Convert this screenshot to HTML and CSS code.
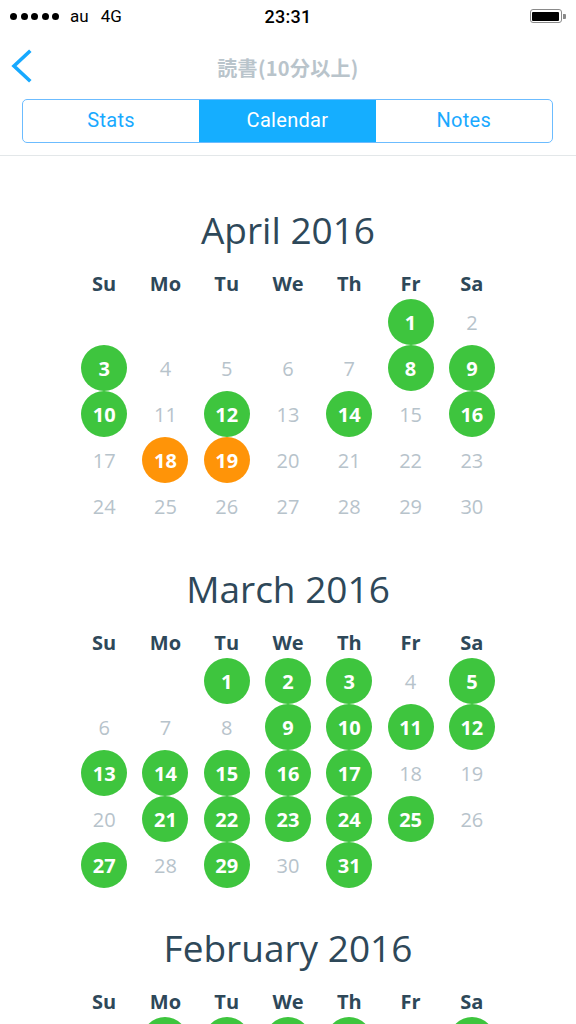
FILE: index.html
```html
<!DOCTYPE html>
<html lang="ja">
<head>
<meta charset="utf-8">
<title>読書(10分以上)</title>
<link rel="stylesheet" href="styles.css">
</head>
<body>
<div class="screen">
  <div class="status">
    <div class="status-left">
      <span class="dots"><i></i><i></i><i></i><i></i><i></i></span>
      <span class="carrier">au</span>
      <span class="net">4G</span>
    </div>
    <div class="time">23:31</div>
    <div class="status-right">
      <span class="battery"><span class="battery-fill"></span></span><span class="battery-tip"></span>
    </div>
  </div>

  <div class="nav">
    <svg class="back" width="24" height="34" viewBox="0 0 24 34"><path d="M19 3 L4 17 L19 31" fill="none" stroke="#17a9ff" stroke-width="3.6" stroke-linecap="square"/></svg>
    <div class="nav-title">読書(10分以上)</div>
  </div>

  <div class="seg-wrap">
    <div class="segment">
      <div class="seg">Stats</div>
      <div class="seg active">Calendar</div>
      <div class="seg">Notes</div>
    </div>
  </div>

  <div class="content">
    <section class="month">
      <h2 class="month-title">April 2016</h2>
      <div class="grid">
        <div class="wd">Su</div><div class="wd">Mo</div><div class="wd">Tu</div><div class="wd">We</div><div class="wd">Th</div><div class="wd">Fr</div><div class="wd">Sa</div>
        <div class="day"></div><div class="day"></div><div class="day"></div><div class="day"></div><div class="day"></div><div class="day"><span class="g">1</span></div><div class="day">2</div>
        <div class="day"><span class="g">3</span></div><div class="day">4</div><div class="day">5</div><div class="day">6</div><div class="day">7</div><div class="day"><span class="g">8</span></div><div class="day"><span class="g">9</span></div>
        <div class="day"><span class="g">10</span></div><div class="day">11</div><div class="day"><span class="g">12</span></div><div class="day">13</div><div class="day"><span class="g">14</span></div><div class="day">15</div><div class="day"><span class="g">16</span></div>
        <div class="day">17</div><div class="day"><span class="o">18</span></div><div class="day"><span class="o">19</span></div><div class="day">20</div><div class="day">21</div><div class="day">22</div><div class="day">23</div>
        <div class="day">24</div><div class="day">25</div><div class="day">26</div><div class="day">27</div><div class="day">28</div><div class="day">29</div><div class="day">30</div>
      </div>
    </section>

    <section class="month">
      <h2 class="month-title">March 2016</h2>
      <div class="grid">
        <div class="wd">Su</div><div class="wd">Mo</div><div class="wd">Tu</div><div class="wd">We</div><div class="wd">Th</div><div class="wd">Fr</div><div class="wd">Sa</div>
        <div class="day"></div><div class="day"></div><div class="day"><span class="g">1</span></div><div class="day"><span class="g">2</span></div><div class="day"><span class="g">3</span></div><div class="day">4</div><div class="day"><span class="g">5</span></div>
        <div class="day">6</div><div class="day">7</div><div class="day">8</div><div class="day"><span class="g">9</span></div><div class="day"><span class="g">10</span></div><div class="day"><span class="g">11</span></div><div class="day"><span class="g">12</span></div>
        <div class="day"><span class="g">13</span></div><div class="day"><span class="g">14</span></div><div class="day"><span class="g">15</span></div><div class="day"><span class="g">16</span></div><div class="day"><span class="g">17</span></div><div class="day">18</div><div class="day">19</div>
        <div class="day">20</div><div class="day"><span class="g">21</span></div><div class="day"><span class="g">22</span></div><div class="day"><span class="g">23</span></div><div class="day"><span class="g">24</span></div><div class="day"><span class="g">25</span></div><div class="day">26</div>
        <div class="day"><span class="g">27</span></div><div class="day">28</div><div class="day"><span class="g">29</span></div><div class="day">30</div><div class="day"><span class="g">31</span></div><div class="day"></div><div class="day"></div>
      </div>
    </section>

    <section class="month">
      <h2 class="month-title">February 2016</h2>
      <div class="grid">
        <div class="wd">Su</div><div class="wd">Mo</div><div class="wd">Tu</div><div class="wd">We</div><div class="wd">Th</div><div class="wd">Fr</div><div class="wd">Sa</div>
        <div class="day"></div><div class="day"><span class="g">1</span></div><div class="day"><span class="g">2</span></div><div class="day"><span class="g">3</span></div><div class="day"><span class="g">4</span></div><div class="day">5</div><div class="day"><span class="g">6</span></div>
        <div class="day">7</div><div class="day">8</div><div class="day">9</div><div class="day">10</div><div class="day">11</div><div class="day">12</div><div class="day">13</div>
      </div>
    </section>
  </div>
</div>
</body>
</html>
```

FILE: styles.css
```css
* { box-sizing: border-box; }
html, body { margin: 0; padding: 0; background: #fff; }
.screen {
  width: 576px;
  height: 1024px;
  overflow: hidden;
  background: #fff;
}

/* status bar */
.status {
  height: 40px;
  display: flex;
  align-items: center;
  justify-content: space-between;
  padding: 0 10px 8px 10px;
  font-family: Roboto, "Liberation Sans", sans-serif;
  color: #000;
}
.status-left { display: flex; align-items: center; width: 160px; }
.dots { display: flex; gap: 3.5px; }
.dots i { display: block; width: 7px; height: 7px; border-radius: 50%; background: #000; }
.carrier { font-size: 17px; margin-left: 11px; }
.net { font-size: 17px; margin-left: 12px; }
.time { font-size: 18px; font-weight: 500; letter-spacing: 0.3px; }
.status-right { width: 160px; display: flex; justify-content: flex-end; align-items: center; }
.battery {
  width: 32px; height: 14px;
  border: 1.5px solid #8a8a8a;
  border-radius: 3px;
  padding: 1.5px;
  display: flex;
}
.battery-fill { flex: 1; background: #000; border-radius: 1px; }
.battery-tip { width: 3px; height: 5px; background: #8a8a8a; border-radius: 0 1px 1px 0; margin-left: 1px; }

/* nav */
.nav {
  height: 54px;
  display: flex;
  align-items: center;
  justify-content: center;
  position: relative;
}
.back { position: absolute; left: 10px; top: 9px; }
.nav-title {
  font-family: "Noto Sans CJK JP", Roboto, sans-serif;
  font-size: 20px;
  font-weight: 700;
  color: #b9c4cb;
  letter-spacing: 0.3px;
}

/* segmented control */
.seg-wrap {
  padding: 5px 23px 12px 22px;
  border-bottom: 1px solid #e3e7e9;
}
.segment {
  display: grid;
  grid-template-columns: 1fr 1fr 1fr;
  height: 44px;
  border: 1.5px solid #6cbcff;
  border-radius: 5px;
  overflow: hidden;
}
.seg {
  display: flex;
  align-items: center;
  justify-content: center;
  padding-bottom: 2px;
  font-family: Roboto, "Liberation Sans", sans-serif;
  font-size: 20px;
  letter-spacing: 0.3px;
  color: #1aa9ff;
}
.seg.active { background: #15aeff; color: #fff; }

/* calendar */
.content { padding-top: 50px; }
.month { margin-bottom: 36px; }
.month-title {
  margin: 0 0 15px 0;
  height: 48px;
  line-height: 48px;
  text-align: center;
  font-family: "Open Sans", sans-serif;
  font-weight: 400;
  font-size: 37px;
  color: #2e4859;
}
.grid {
  width: 429px;
  margin: 0 auto;
  display: grid;
  grid-template-columns: repeat(7, 1fr);
  font-family: "Open Sans", sans-serif;
}
.wd {
  height: 30px;
  line-height: 30px;
  text-align: center;
  font-size: 20px;
  font-weight: 700;
  color: #2e4859;
}
.day {
  height: 46px;
  display: flex;
  align-items: center;
  justify-content: center;
  font-size: 20px;
  color: #b7c3cb;
}
.day span {
  width: 46px;
  height: 46px;
  border-radius: 50%;
  display: flex;
  align-items: center;
  justify-content: center;
  color: #fff;
  font-weight: 700;
}
.day .g { background: #3ec53e; }
.day .o { background: #ff9408; }
```
